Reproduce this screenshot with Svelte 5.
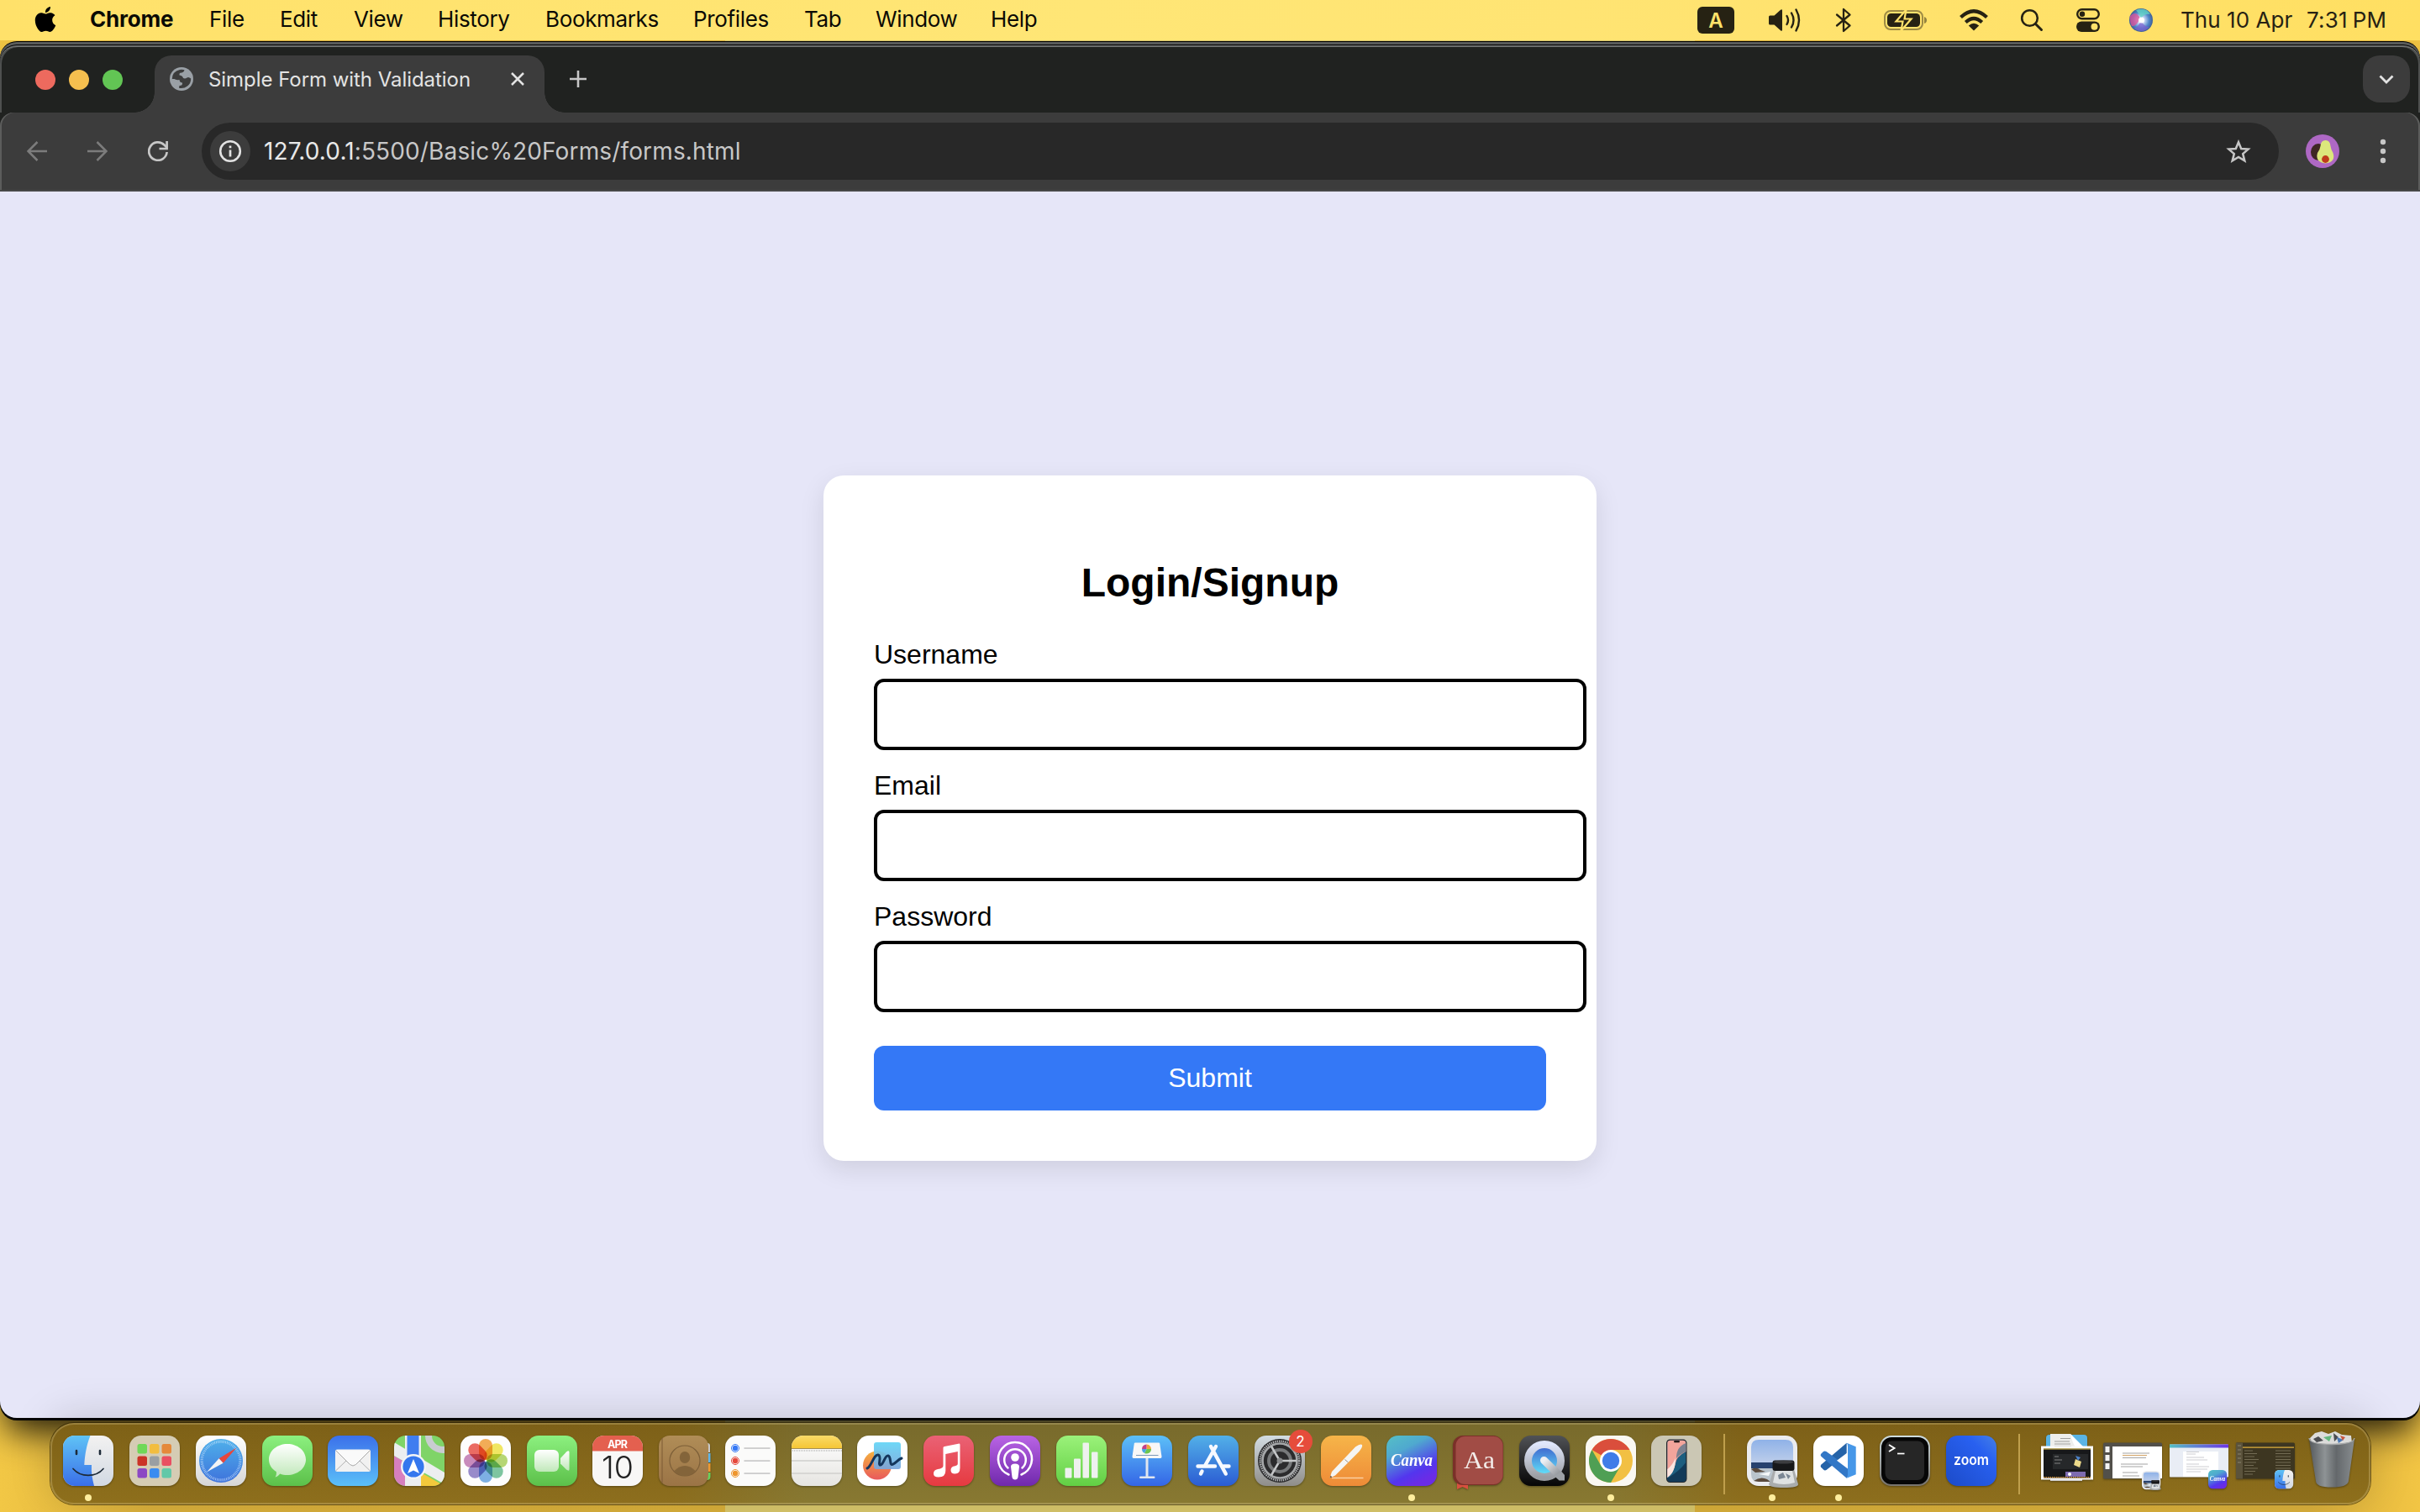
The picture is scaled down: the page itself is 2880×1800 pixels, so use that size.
<script>
  const menus = ['File', 'Edit', 'View', 'History', 'Bookmarks', 'Profiles', 'Tab', 'Window', 'Help'];
  const fields = [
    { id: 'username', label: 'Username', type: 'text' },
    { id: 'email', label: 'Email', type: 'email' },
    { id: 'password', label: 'Password', type: 'password' }
  ];
  const range = (n) => Array.from({ length: n }, (_, i) => i);
  const pads = ['#6fd858', '#f2bd3f', '#e5893a', '#cb3327', '#9a9fa2', '#e94f62', '#8c48c4', '#3a8cf0', '#62c8a8'];
  const petals = ['#f29a2e', '#efe23c', '#a6cf52', '#5fb98a', '#5d9fe0', '#7f6fc0', '#bd6fae', '#e8473d'];
</script>

{#snippet finder()}
  <rect width="60" height="60" rx="14" fill="url(#gFinderR)" />
  <path d="M14 0H32.5C28 11 26 23 25.3 35H34C33.4 44 35 52 37 60H14A14 14 0 0 1 0 46V14A14 14 0 0 1 14 0Z" fill="url(#gFinderL)" />
  <path d="M16 18v4M44 18v4" stroke="#1d2a38" stroke-width="2.6" stroke-linecap="round" />
  <path d="M12 39.500C21 50 39 50 48 39.500" fill="none" stroke="#1d2a38" stroke-width="1.700" stroke-linecap="round" />
{/snippet}

{#snippet launchpad()}
  <rect width="60" height="60" rx="14" fill="#d5ccb4" />
  {#each pads as c, i}
    <rect x={9.500 + (i % 3) * 14.500} y={10 + Math.floor(i / 3) * 14.500} width="11.500" height="11.500" rx="2.500" fill={c} />
  {/each}
{/snippet}

{#snippet safari()}
  <rect width="60" height="60" rx="14" fill="url(#gPaper)" />
  <circle cx="30" cy="30" r="26" fill="url(#gSafari)" />
  <circle cx="30" cy="30" r="22.800" fill="none" stroke="#d7ebff" stroke-width="3.200" stroke-dasharray="0.700 1.200" opacity=".8" />
  <path d="M48.500 14.500L27.600 27.200L32.600 32.700Z" fill="#e8463c" />
  <path d="M13 43.500L27.600 27.200L32.600 32.700Z" fill="#f4f4f4" />
{/snippet}

{#snippet messages()}
  <rect width="60" height="60" rx="14" fill="url(#gGreen)" />
  <path d="M30 10C42 10 52 18 52 28.500S42 47 30 47C26.500 47 23.800 46.500 21.200 45.500C19.500 47.800 17.500 49 15.500 49.500C16.800 47.500 17.200 45.500 16.800 43C11.500 39.800 8 34.800 8 28.500C8 18 18 10 30 10Z" fill="url(#gBubble)" />
{/snippet}

{#snippet mail()}
  <rect width="60" height="60" rx="14" fill="url(#gMail)" />
  <rect x="9" y="16.500" width="42" height="26.500" rx="2.500" fill="#f1f1f1" />
  <path d="M9.500 42L23 29M50.500 42L37 29" stroke="#a9a9a9" stroke-width=".9" />
  <path d="M9.500 17.500L26.500 34.500Q30 37.500 33.500 34.500L50.500 17.500" fill="#fafafa" stroke="#9f9f9f" stroke-width=".9" />
{/snippet}

{#snippet maps()}
  <g clip-path="url(#squircle)">
    <rect width="60" height="60" fill="#7fd468" />
    <path d="M0 24L14 32V60H0Z" fill="#d67fbe" />
    <path d="M30 60L60 60L32 44Z" fill="#f3c93c" />
    <path d="M0 8L60 44V58L0 24Z" fill="#eceef0" />
    <circle cx="58" cy="0" r="17" fill="none" stroke="#c9ccd0" stroke-width="8" />
    <path d="M13 0H32V60H13Z" fill="#eceef0" />
    <rect x="15.500" width="14" height="30" fill="#3f7df0" />
    <circle cx="23" cy="37" r="15" fill="#f3f4f6" />
    <circle cx="23" cy="37" r="12.600" fill="#3577ee" />
    <path d="M23 28L30 45L23 41.500L16 45Z" fill="#fff" />
  </g>
{/snippet}

{#snippet photos()}
  <rect width="60" height="60" rx="14" fill="#fdfdfd" />
  {#each petals as c, i}
    <rect x="22" y="4" width="16" height="25" rx="8" fill={c} opacity=".8" transform="rotate({i * 45} 30 30)" class="petal" />
  {/each}
{/snippet}

{#snippet facetime()}
  <rect width="60" height="60" rx="14" fill="url(#gGreen)" />
  <rect x="9" y="17" width="29" height="26" rx="6" fill="url(#gBubble)" />
  <path d="M40 27L47 19.500Q50.500 17 50.500 20V40Q50.500 43 47 40.500L40 33.500Z" fill="url(#gBubble)" />
{/snippet}

{#snippet calendar()}
  <rect width="60" height="60" rx="14" fill="#f8f7f6" />
  <path d="M0 18.500V14A14 14 0 0 1 14 0H46A14 14 0 0 1 60 14V18.500Z" fill="#e4604f" />
  <text x="30" y="14.500" text-anchor="middle" font-size="12.500" font-weight="700" fill="#fff" textLength="24">APR</text>
  <text x="30" y="50.500" text-anchor="middle" font-size="37" font-weight="300" fill="#222" textLength="38" lengthAdjust="spacingAndGlyphs">10</text>
{/snippet}

{#snippet contacts()}
  <path d="M52 9H58Q61 9 61 12V20H52Z" fill="#c9c9c9" />
  <rect x="52" y="21" width="9.500" height="11" fill="#5eb6ea" />
  <rect x="52" y="33" width="9.500" height="10" fill="#ee9a32" />
  <path d="M52 44H61.500V49Q61.500 53 57 53H52Z" fill="#68d15c" />
  <rect x="0" width="59" height="60" rx="13" fill="url(#gTan)" />
  <path d="M4 3V57" stroke="#7c5a34" stroke-width="1" />
  <circle cx="31" cy="30" r="18" fill="none" stroke="#7d5f38" stroke-width="1.200" />
  <ellipse cx="31" cy="26" rx="6.200" ry="7" fill="#83643a" />
  <path d="M18.500 42Q24 36 31 36T43.500 42Q38 48 31 48T18.500 42Z" fill="#83643a" />
{/snippet}

{#snippet reminders()}
  <rect width="60" height="60" rx="14" fill="#fbfbfa" />
  {#each ['#3478f6', '#e5483b', '#ee962e'] as c, i}
    <circle cx="12" cy={15 + i * 15} r="4.500" fill="none" stroke={c} stroke-width="1" />
    <circle cx="12" cy={15 + i * 15} r="3.200" fill={c} />
    <rect x="22.500" y={14.400 + i * 15} width="31" height="1.300" fill="#b9b9bb" />
  {/each}
{/snippet}

{#snippet notes()}
  <rect width="60" height="60" rx="14" fill="url(#gNote)" />
  <path d="M0 15V14A14 14 0 0 1 14 0H46A14 14 0 0 1 60 14V15Z" fill="url(#gNoteTop)" />
  <path d="M0 15.500H60" stroke="#a58f55" stroke-width="1" />
  <path d="M1 18H60" stroke="#9d9d9d" stroke-width="1" stroke-dasharray="1 1" />
  <path d="M0 30H60M0 45H60" stroke="#cfcfcd" stroke-width="1.500" />
{/snippet}

{#snippet freeform()}
  <rect width="60" height="60" rx="14" fill="#fff" />
  <circle cx="24" cy="35.500" r="17" fill="url(#gOrb)" />
  <rect x="20" y="8" width="32" height="32" rx="3" fill="url(#gCyan)" opacity=".92" />
  <path d="M12 39C17 37 20 22 25 23S24 36 28 35S33 23 37 24S38 37 43 34S48 29 53 27" fill="none" stroke="#14365c" stroke-width="3" stroke-linecap="round" stroke-linejoin="round" />
{/snippet}

{#snippet music()}
  <rect width="60" height="60" rx="14" fill="url(#gMusic)" />
  <path d="M23.500 14.500Q23.500 13.200 25 12.900L41.500 9.700Q43.500 9.300 43.500 11V38.500Q43.500 45.500 37.500 45.500Q32.500 45.500 32.500 41Q32.500 37 37.500 36.200Q40.800 35.700 40.800 33.500V19L26.300 22V42Q26.300 49.500 18 49.500Q12 49.500 12 45.200Q12 41 17 40Q23.500 39 23.500 36Z" fill="#fff" />
{/snippet}

{#snippet podcasts()}
  <rect width="60" height="60" rx="14" fill="url(#gPod)" />
  <path d="M22.500 46.500A20 20 0 1 1 37.500 46.500" fill="none" stroke="#fff" stroke-width="2.500" stroke-linecap="round" />
  <path d="M21.500 38.500A12.800 12.800 0 1 1 38.500 38.500" fill="none" stroke="#fff" stroke-width="2.500" stroke-linecap="round" />
  <circle cx="30" cy="26" r="4.800" fill="#fff" />
  <path d="M25 37Q25 33.500 30 33.500T35 37L33.500 49.500Q33 52.500 30 52.500T26.500 49.500Z" fill="#fff" />
{/snippet}

{#snippet numbers()}
  <rect width="60" height="60" rx="14" fill="url(#gNum)" />
  <rect x="10.500" y="38.500" width="8" height="12" rx="1" fill="#eef1ee" />
  <rect x="21" y="27.500" width="8" height="23" rx="1" fill="#eef1ee" />
  <rect x="31.500" y="8.500" width="7.500" height="42" rx="1" fill="#eef1ee" />
  <rect x="42" y="19.500" width="7.500" height="31" rx="1" fill="#eef1ee" />
{/snippet}

{#snippet keynote()}
  <rect width="60" height="60" rx="14" fill="url(#gKey)" />
  <rect x="28.500" y="26" width="3" height="24" fill="#dfe5ef" />
  <rect x="21" y="48.500" width="18.500" height="2.500" rx="1.200" fill="#dfe5ef" />
  <path d="M16 8.500H44Q45 8.500 45.200 9.500L47.500 25Q47.600 27 46 27H14Q12.400 27 12.500 25L14.800 9.500Q15 8.500 16 8.500Z" fill="#f7f7f7" />
  <path d="M17 23.500H43.500" stroke="#7b97b8" stroke-width="1" />
  <path d="M29.500 16V10.500A5.500 5.500 0 0 1 34.800 17.500Z" fill="#f0a63c" />
  <path d="M29.500 16L35 16A5.500 5.500 0 0 1 27 21Z" fill="#6cc64f" />
  <path d="M29.500 16L27 21A5.500 5.500 0 0 1 24 16Z" fill="#4aa6e0" />
  <path d="M29.500 16H24A5.500 5.500 0 0 1 29.500 10.500Z" fill="#c43f8b" />
{/snippet}

{#snippet appstore()}
  <rect width="60" height="60" rx="14" fill="url(#gStore)" />
  <g stroke="#f6f9ff" stroke-width="4.400" stroke-linecap="round">
    <path d="M33 13L20.500 35M27 13L44.800 45.500M16.500 42.500L15 45.500" />
    <path d="M11.500 36.500H32M42 36.500H48.500" />
  </g>
{/snippet}

{#snippet settings()}
  <rect width="60" height="60" rx="14" fill="url(#gSet)" />
  <circle cx="30" cy="30" r="26" fill="#2b2b2d" />
  <circle cx="30" cy="30" r="23.300" fill="none" stroke="#b4b6b8" stroke-width="2.600" stroke-dasharray="1.300 1.100" />
  <circle cx="30" cy="30" r="20.500" fill="none" stroke="#a6a8aa" stroke-width="2.600" />
  <circle cx="30" cy="30" r="13" fill="none" stroke="#77797b" stroke-width="4" />
  <path d="M30 30H50M30 30L20 12.800M30 30L20 47.200" stroke="#c4c6c8" stroke-width="2.600" />
  <circle cx="30" cy="30" r="3.500" fill="#8a8c8e" />
{/snippet}

{#snippet pages()}
  <rect width="60" height="60" rx="14" fill="url(#gPages)" />
  <path d="M13 50.500H50.500" stroke="#fbd0a0" stroke-width="1.600" />
  <path d="M10.500 50.500L13 43L41 13.500Q47 9.500 49 11Q50 13.500 45.500 19L17 47.500Z" fill="#f5f5f3" />
  <path d="M28.500 28.500L32.500 32" stroke="#9a8f85" stroke-width="1" />
  <path d="M10.500 50.500L11.500 47.500L13.500 49.500Z" fill="#6a5a4a" />
{/snippet}

{#snippet canva()}
  <rect width="60" height="60" rx="14" fill="url(#gCanva)" />
  <text x="5" y="35.500" class="script" font-size="20" fill="#fff" textLength="50" lengthAdjust="spacingAndGlyphs">Canva</text>
{/snippet}

{#snippet dictionary()}
  <path d="M5 54H18V64L11.500 61L5 64Z" fill="#d8503f" />
  <rect width="60" height="59" rx="12" fill="#7b3029" />
  <rect x="3.500" y="1" width="56" height="57" rx="11" fill="#a14c45" />
  <text x="31.500" y="38.500" text-anchor="middle" class="serif" font-size="30" fill="#f3ece9" textLength="37" lengthAdjust="spacingAndGlyphs">Aa</text>
{/snippet}

{#snippet quicktime()}
  <rect width="60" height="60" rx="14" fill="url(#gDark)" />
  <circle cx="30" cy="30" r="19.500" fill="url(#gQt)" stroke="url(#gSilver)" stroke-width="9" />
  <path d="M29.500 29.500L48 47.500" stroke="url(#gSilver2)" stroke-width="9" stroke-linecap="round" />
  <path d="M42 48L50 42.500L54 47V53.500H47.500Z" fill="#9da1a6" />
{/snippet}

{#snippet chrome()}
  <rect width="60" height="60" rx="14" fill="#faf8f2" />
  <circle cx="30" cy="30" r="26" fill="#f2c043" />
  <path d="M30 30L7.500 17A26 26 0 0 1 52.500 17H30Z" fill="#da4e3c" />
  <path d="M18.700 36.500L7.500 17A26 26 0 0 0 30 56L41.300 36.500Z" fill="#4f9f54" />
  <circle cx="30" cy="30" r="13" fill="#fff" />
  <circle cx="30" cy="30" r="10.200" fill="#3f7ce8" />
{/snippet}

{#snippet iphone()}
  <rect width="60" height="60" rx="14" fill="#cbc7b4" />
  <rect x="18" y="4.500" width="24.500" height="51.500" rx="4.500" fill="#20242b" />
  <rect x="19.300" y="5.800" width="22" height="49" rx="3.500" fill="#1d5e7f" />
  <path d="M19.300 50V9Q19.300 5.800 23 5.800H37.500Q41.300 5.800 41.300 9V19Q30 25 29 33Q27 44 19.300 50Z" fill="#f3a59c" />
  <path d="M19.300 50V40Q24 37 29 27Q29 44 19.300 50Z" fill="#fbe6e0" />
  <path d="M30 27Q30 13 41.300 9V19Q33 23 30 27Z" fill="#7b8190" />
  <path d="M19.300 51Q34 42 41.300 32V51Q41.300 54.800 37.500 54.800H23Q19.300 54.800 19.300 51Z" fill="#123a58" />
  <rect x="27" y="6.200" width="7" height="2" rx="1" fill="#0a0a0a" />
{/snippet}

{#snippet preview()}
  <rect width="60" height="60" rx="14" fill="#ebecef" />
  <path d="M5 14Q5 5 14 5H46Q55 5 55 14V32H5Z" fill="url(#gSky)" />
  <rect x="5" y="32" width="50" height="8" fill="#27426e" />
  <path d="M5 39H55V46Q55 55 46 55H14Q5 55 5 46Z" fill="#b9c4cc" />
  <path d="M5 40Q12 37 16 41L22 43L10 44ZM8 54Q16 48 24 52L28 55H14Z" fill="#5a4a3c" />
  <path d="M14 46L28 43L26 48Z" fill="#f4f7f8" />
  <path d="M32 40H56L61 58Q61 62 44 62T26 58Z" fill="#a9acad" />
  <path d="M34 42H54L57 56Q44 60 31 56Z" fill="#dfe2e3" />
  <path d="M37 47L43 44L46 50L38 52ZM46 45L52 48L49 52Z" fill="#7b8794" />
  <rect x="30.500" y="29.500" width="26" height="12.500" rx="3" fill="#17181a" />
  <ellipse cx="43.500" cy="31.500" rx="12" ry="2" fill="#3c3d40" />
{/snippet}

{#snippet vscode()}
  <rect width="60" height="60" rx="14" fill="#fff" />
  <path d="M39.700 8.700L39.700 22L15.500 41Q13.500 42 12 40.500L9 37.500Q8 36 9.500 34.500Z" fill="#2563a8" />
  <path d="M39.700 50.700L9.500 25Q8 23.500 9 22L12 19Q13.500 17.800 15.500 19L46 41Z" fill="#3277c6" />
  <path d="M39.700 8.700L50.700 13.300V46.300L39.700 50.700Q41 49 41 46V13Q41 10 39.700 8.700Z" fill="#4697e8" />
  <path d="M41 20V39.500L28 29.700Z" fill="#fff" />
{/snippet}

{#snippet terminal()}
  <rect width="60" height="60" rx="14" fill="url(#gTerm)" />
  <rect x="2" y="2" width="56" height="56" rx="12" fill="#060606" />
  <rect x="6.500" y="6.500" width="46.500" height="46.500" rx="8" fill="#262626" />
  <path d="M11 11L17.500 15L11 19" fill="none" stroke="#fff" stroke-width="1.900" />
  <path d="M21 21.500H29.500" stroke="#fff" stroke-width="1.700" />
{/snippet}

{#snippet zoom()}
  <rect width="60" height="60" rx="14" fill="url(#gZoom)" />
  <text x="30" y="34.500" text-anchor="middle" font-size="18" font-weight="600" fill="#fff" textLength="42" lengthAdjust="spacingAndGlyphs">zoom</text>
{/snippet}

{#snippet downloads()}
  <rect x="5" y="-1" width="49" height="24" rx="4" fill="#5ab4e4" />
  <path d="M10 -2H34L48 14V50H10Z" fill="#eeeeec" />
  <path d="M34 -2L50 14H40Q36 8 34 -2Z" fill="#fff" />
  <path d="M22 3.500H34M15 7H33M15 10H34M15 13H35" stroke="#8a8a8a" stroke-width=".8" />
  <rect x="10" y="50" width="38" height="4" fill="#cfcfcf" />
  <rect x="-1" y="12.500" width="62" height="40" fill="#fafafa" />
  <rect x="2" y="15.500" width="56" height="35" fill="#17181a" />
  <rect x="2" y="15.500" width="56" height="1" fill="#e8c84e" />
  <rect x="13" y="22" width="42" height="18" fill="#26282a" />
  <path d="M15 25H20M15 29H24M15 33H22" stroke="#9a9a9a" stroke-width=".8" />
  <path d="M40 28L47 31L45 38L38 35Z" fill="#ecd98a" />
  <path d="M40 24L46 26L43 30Z" fill="#4c82c8" />
  <rect x="28" y="43" width="24" height="6" fill="#7d6bb0" />
  <circle cx="33" cy="46" r="2" fill="#fff" />
  <path d="M2 49.700H58" stroke="#d5963d" stroke-width="1.400" stroke-dasharray="1.500 1" />
{/snippet}

{#snippet minPreview()}
  <rect x="-5" y="8.500" width="70" height="43" rx="1.500" fill="#52504a" />
  <rect x="6" y="13" width="59" height="38" fill="#fff" />
  <rect x="-2.500" y="13" width="5" height="7" fill="#f3f3f3" />
  <rect x="-2.500" y="23" width="5" height="7" fill="#f3f3f3" />
  <rect x="-2.500" y="33" width="5" height="7" fill="#f3f3f3" />
  <path d="M18 21H50M18 26.500H46M16 34H48M16 37H42M18 44H36M18 48H38" stroke="#8d8d8d" stroke-width=".8" />
  <path d="M18 23.500H47" stroke="#d3a468" stroke-width="1" />
  <g transform="translate(41 42) scale(.37)">{@render preview()}</g>
{/snippet}

{#snippet minCanva()}
  <rect x="-5" y="10.500" width="70" height="39" rx="1" fill="#e9edf5" />
  <rect x="-5" y="10.500" width="70" height="4" fill="url(#gCanvaBar)" />
  <rect x="11" y="19" width="42" height="30" fill="#fff" />
  <path d="M15 19.500H30M15 22H26M15 26H36M15 29H40M15 34H30M15 37H42M15 40H40M15 43H32" stroke="#b7b7bd" stroke-width=".7" />
  <g transform="translate(41 41) scale(.37)">{@render canva()}</g>
{/snippet}

{#snippet minFinder()}
  <rect x="-5" y="8.500" width="70" height="43" rx="1.500" fill="#3d3621" />
  <rect x="-5" y="8.500" width="8" height="43" fill="#5b533c" />
  <path d="M-3 12H1M-3 17H1M-3 22H1M-3 27H1M-3 32H1" stroke="#918a74" stroke-width=".9" />
  <rect x="3" y="13.500" width="61" height="1.200" fill="#e8b53f" />
  {#each range(9) as i}
    <path d="M5 {18 + i * 3.500}H{15 + ((i * 5) % 8)}M42 {18 + i * 3.500}H60" stroke="#827a62" stroke-width=".8" />
  {/each}
  <g transform="translate(41 41) scale(.37)">{@render finder()}</g>
{/snippet}

{#snippet trash()}
  <path d="M4 3L10 -3L18 -5L26 -2L34 -5L42 -1L53 0L54 8L30 14L6 10Z" fill="#dcdcda" />
  <path d="M8 4L14 1L20 6L12 8ZM32 -3L38 2L33 7Z" fill="#4b4d50" />
  <path d="M20 2L30 0L27 7Z" fill="#63b77d" /><path d="M36 2L44 5L38 9Z" fill="#4c79b5" /><path d="M40 0L46 2L43 6Z" fill="#c8553d" />
  <path d="M3 4Q5 10 30 10T57 4L50 54Q49 61.500 30 61.500T11 54Z" fill="url(#gTrash)" />
  <path d="M3 3Q4 10.500 30 10.500T57 3" fill="none" stroke="#a5a7a8" stroke-width="1.400" />
{/snippet}

{#snippet cell(draw, running = false, badge = '')}
  <div class="cell">
    <svg class="app" viewBox="0 0 60 60">{@render draw()}</svg>
    {#if running}<span class="dot"></span>{/if}
    {#if badge}<span class="badge">{badge}</span>{/if}
  </div>
{/snippet}

<svg class="defs" aria-hidden="true">
  <defs>
    <clipPath id="squircle"><rect width="60" height="60" rx="14" /></clipPath>
    <linearGradient id="gFinderL" x2="0" y2="1"><stop stop-color="#5fc3f6" /><stop offset="1" stop-color="#3a6fe8" /></linearGradient>
    <linearGradient id="gFinderR" x2="0" y2="1"><stop stop-color="#f3f2f1" /><stop offset="1" stop-color="#d2d9e3" /></linearGradient>
    <linearGradient id="gPaper" x2="0" y2="1"><stop stop-color="#fff" /><stop offset="1" stop-color="#d6d6d6" /></linearGradient>
    <linearGradient id="gSafari" x2="0" y2="1"><stop stop-color="#4fb0ea" /><stop offset="1" stop-color="#3e73dc" /></linearGradient>
    <linearGradient id="gGreen" x2="0" y2="1"><stop stop-color="#8cf07f" /><stop offset="1" stop-color="#5cc04a" /></linearGradient>
    <linearGradient id="gBubble" x2="0" y2="1"><stop stop-color="#fff" /><stop offset="1" stop-color="#c0e8b9" /></linearGradient>
    <linearGradient id="gMail" x2="0" y2="1"><stop stop-color="#3b70ea" /><stop offset="1" stop-color="#5bc0f8" /></linearGradient>
    <linearGradient id="gTan" x2="0" y2="1"><stop stop-color="#b08d57" /><stop offset="1" stop-color="#9b7446" /></linearGradient>
    <linearGradient id="gNote" x2="0" y2="1"><stop stop-color="#fff" /><stop offset="1" stop-color="#e6e5e1" /></linearGradient>
    <linearGradient id="gNoteTop" x2="0" y2="1"><stop stop-color="#fadb68" /><stop offset="1" stop-color="#f5c636" /></linearGradient>
    <linearGradient id="gOrb" x2="0" y2="1"><stop stop-color="#f4b13d" /><stop offset="1" stop-color="#e95a5c" /></linearGradient>
    <linearGradient id="gCyan" x2="0" y2="1"><stop stop-color="#62d4f6" /><stop offset="1" stop-color="#7aa6dc" /></linearGradient>
    <linearGradient id="gMusic" x2="0" y2="1"><stop stop-color="#ea6275" /><stop offset="1" stop-color="#e63a40" /></linearGradient>
    <linearGradient id="gPod" x2="0" y2="1"><stop stop-color="#b964e4" /><stop offset="1" stop-color="#7029ad" /></linearGradient>
    <linearGradient id="gNum" x2="0" y2="1"><stop stop-color="#9bf27a" /><stop offset="1" stop-color="#62cf44" /></linearGradient>
    <linearGradient id="gKey" x2="0" y2="1"><stop stop-color="#5cc0f8" /><stop offset="1" stop-color="#3466e6" /></linearGradient>
    <linearGradient id="gStore" x2="0" y2="1"><stop stop-color="#52b0e8" /><stop offset="1" stop-color="#2b5cd3" /></linearGradient>
    <linearGradient id="gSet" x2="0" y2="1"><stop stop-color="#d3dde3" /><stop offset="1" stop-color="#8f8d8a" /></linearGradient>
    <linearGradient id="gPages" x2="0" y2="1"><stop stop-color="#f6b549" /><stop offset="1" stop-color="#ee8b37" /></linearGradient>
    <linearGradient id="gCanva" x2=".5" y2="1"><stop stop-color="#55c0c6" /><stop offset=".35" stop-color="#4fa9cf" /><stop offset=".8" stop-color="#5336ee" /><stop offset="1" stop-color="#6a2ce6" /></linearGradient>
    <linearGradient id="gCanvaBar"><stop stop-color="#54c0c4" /><stop offset="1" stop-color="#6d35e6" /></linearGradient>
    <linearGradient id="gDark" x2="0" y2="1"><stop stop-color="#505256" /><stop offset="1" stop-color="#060606" /></linearGradient>
    <linearGradient id="gQt" x2="0" y2="1"><stop stop-color="#3c5ccb" /><stop offset="1" stop-color="#65edfd" /></linearGradient>
    <linearGradient id="gSilver" x2="0" y2="1"><stop stop-color="#dfe6fb" /><stop offset="1" stop-color="#9a9da2" /></linearGradient>
    <linearGradient id="gSilver2" x2="1" y2="1"><stop stop-color="#eef0f4" /><stop offset="1" stop-color="#8d9196" /></linearGradient>
    <linearGradient id="gSky" x2="0" y2="1"><stop stop-color="#8fb2e8" /><stop offset="1" stop-color="#bccdea" /></linearGradient>
    <linearGradient id="gTerm" x2="0" y2="1"><stop stop-color="#cfdde0" /><stop offset="1" stop-color="#77736c" /></linearGradient>
    <linearGradient id="gZoom" x1="1" x2="0" y2="1"><stop stop-color="#4580e6" /><stop offset=".3" stop-color="#2860f0" /><stop offset="1" stop-color="#1c4bc8" /></linearGradient>
    <linearGradient id="gTrash"><stop stop-color="#55595c" /><stop offset=".35" stop-color="#8e9395" /><stop offset=".6" stop-color="#64686b" /><stop offset="1" stop-color="#888d90" /></linearGradient>
    <radialGradient id="gSiri" cx=".5" cy=".5"><stop stop-color="#fff" /><stop offset=".3" stop-color="#c9d7f4" /><stop offset=".7" stop-color="#4e86c8" /><stop offset="1" stop-color="#3f5f96" /></radialGradient>
  </defs>
</svg>

<div class="desktop">
  <header class="menubar">
    <svg class="apple" viewBox="0 0 24 24"><path d="M12.152 6.896c-.948 0-2.415-1.078-3.960-1.040-2.040.027-3.910 1.183-4.961 3.014-2.117 3.675-.546 9.103 1.519 12.090 1.013 1.454 2.208 3.090 3.792 3.039 1.520-.065 2.090-.987 3.935-.987 1.831 0 2.350.987 3.960.948 1.637-.026 2.676-1.480 3.676-2.948 1.156-1.688 1.636-3.325 1.662-3.415-.039-.013-3.182-1.221-3.220-4.857-.026-3.040 2.480-4.494 2.597-4.559-1.429-2.090-3.623-2.324-4.390-2.376-2-.156-3.675 1.090-4.610 1.090zM15.530 3.830c.843-1.012 1.400-2.427 1.245-3.830-1.207.052-2.662.805-3.532 1.818-.780.896-1.454 2.338-1.273 3.714 1.338.104 2.715-.688 3.559-1.701" /></svg>
    <nav>
      <b>Chrome</b>
      {#each menus as m}<span>{m}</span>{/each}
    </nav>
    <div class="status">
      <span class="lang">A</span>
      <svg class="vol" viewBox="0 0 40 28"><path d="M0 10Q0 8.500 1.500 8.500H6.500L14 1.700Q16 .3 16 2.500V25.500Q16 27.700 14 26.300L6.500 19.500H1.500Q0 19.500 0 18Z" fill="#262213" /><path d="M21.500 9Q24.500 14 21.500 19M27 5.500Q32 14 27 22.500M32.500 1.500Q39.500 14 32.500 26.500" fill="none" stroke="#262213" stroke-width="2.400" stroke-linecap="round" /></svg>
      <svg class="bt" viewBox="0 0 20 30"><path d="M2 8.500L17.500 21.500L10 28V2L17.500 8.500L2 21.500" fill="none" stroke="#262213" stroke-width="2.300" stroke-linejoin="round" stroke-linecap="round" /></svg>
      <svg class="bat" viewBox="0 0 52 28"><rect x="1" y="3" width="45" height="22" rx="7" fill="none" stroke="#262213" stroke-width="2" opacity=".45" /><path d="M48 10Q51 11 51 14T48 18Z" fill="#262213" opacity=".5" /><rect x="4" y="6" width="39" height="16" rx="4.500" fill="#262213" /><path d="M26.500 1.500L14.500 15.500H22.500L20.500 26.500L32.500 12.500H24.500Z" fill="#262213" stroke="#ffe26b" stroke-width="2.200" /></svg>
      <svg class="wifi" viewBox="0 0 36 26"><path d="M2.500 9.500Q18 -5 33.500 9.500M8.300 15.500Q18 6.500 27.700 15.500" fill="none" stroke="#262213" stroke-width="4.200" /><path d="M18 25.500L11.800 19.500Q18 13.800 24.200 19.500Z" fill="#262213" /></svg>
      <svg class="find" viewBox="0 0 28 28"><circle cx="11.500" cy="11.500" r="9.300" fill="none" stroke="#262213" stroke-width="2.600" /><path d="M18.500 18.500L25.500 25.500" stroke="#262213" stroke-width="3" stroke-linecap="round" /></svg>
      <svg class="cc" viewBox="0 0 28 28"><rect x="1.200" y="1.200" width="25.600" height="11" rx="5.500" fill="none" stroke="#262213" stroke-width="2.400" /><circle cx="7" cy="6.700" r="3.200" fill="#262213" /><rect y="15.500" width="28" height="12.500" rx="6.200" fill="#262213" /><circle cx="21.500" cy="21.700" r="4" fill="#ffe26b" /></svg>
      <svg class="siri" viewBox="0 0 28 28"><circle cx="14" cy="14" r="14" fill="url(#gSiri)" /><path d="M1 9Q8 2 13 12Q8 22 3 21Q0 15 1 9Z" fill="#e04f96" opacity=".75" /><path d="M8 2Q20 -2 25 7Q18 6 14 12Q12 6 8 2Z" fill="#5fd3c4" opacity=".8" /><path d="M6 24Q12 20 14 15Q18 22 24 22Q16 31 6 24Z" fill="#7a5fd0" opacity=".7" /><circle cx="14.500" cy="14" r="3.500" fill="#fff" opacity=".95" /></svg>
      <span class="date">Thu 10 Apr</span>
      <span class="clock">7:31 PM</span>
    </div>
  </header>

  <section class="window">
    <div class="tabs">
      <div class="lights"><i class="red"></i><i class="amber"></i><i class="green"></i></div>
      <div class="tab">
        <svg class="globe" viewBox="0 0 28 28">
          <circle cx="14" cy="14" r="14" fill="#9aa0a6" />
          <path d="M2.800 14Q3 5 12 3Q15 2.500 17.500 3.200Q17 6.500 12.500 6.800Q11 7.500 11.500 9.500Q15.500 10 16 13Q18.500 14 20.500 12.500Q22.500 11 25.200 13.500Q25.400 19 21 22.500Q17 25.800 11 24.800L11.500 22Q15.500 22 15 18.500Q12 18.500 11.500 15Q7 15.500 5.500 14Z" fill="#3c3c3c" />
        </svg>
        <span class="title">Simple Form with Validation</span>
        <svg class="close" viewBox="0 0 16 16"><path d="M1 1L15 15M15 1L1 15" stroke="#e3e3e3" stroke-width="2.500" /></svg>
      </div>
      <svg class="plus" viewBox="0 0 20 20"><path d="M10 0V20M0 10H20" stroke="#c7c7c7" stroke-width="2.600" /></svg>
      <div class="more"><svg viewBox="0 0 18 11"><path d="M1.500 1.500L9 9L16.500 1.500" fill="none" stroke="#e3e3e3" stroke-width="2.800" /></svg></div>
    </div>
    <div class="toolbar">
      <svg class="nav back" viewBox="0 0 24 24"><path d="M24 12H2M12.500 1L1.500 12L12.500 23" fill="none" stroke="#7c7c7c" stroke-width="2.500" /></svg>
      <svg class="nav fwd" viewBox="0 0 24 24"><path d="M0 12H22M11.500 1L22.500 12L11.500 23" fill="none" stroke="#7c7c7c" stroke-width="2.500" /></svg>
      <svg class="nav reload" viewBox="0 0 24 24"><path d="M22.600 13A10.700 10.700 0 1 1 19.500 4.500L22.500 7.500" fill="none" stroke="#c7c7c7" stroke-width="2.700" /><path d="M22.600 0V9H13.500" fill="none" stroke="#c7c7c7" stroke-width="2.700" /></svg>
      <div class="url">
        <span class="info"><svg viewBox="0 0 28 28"><circle cx="14" cy="14" r="11.800" fill="none" stroke="#e3e3e3" stroke-width="2.600" /><path d="M14 12.500V20.500M14 7.500V10.200" stroke="#e3e3e3" stroke-width="2.700" /></svg></span>
        <span class="addr"><em>127.0.0.1</em>:5500/Basic%20Forms/forms.html</span>
        <svg class="star" viewBox="0 0 30 29"><path d="M15 3.200L18.200 11L26.600 11.600L20.200 17.100L22.300 25.400L15 20.900L7.700 25.400L9.800 17.100L3.400 11.600L11.800 11Z" fill="none" stroke="#c7c7c7" stroke-width="2.500" /></svg>
      </div>
      <svg class="avatar" viewBox="0 0 40 40"><circle cx="20" cy="20" r="20" fill="#ae68c4" /><ellipse cx="15" cy="21" rx="9" ry="10" fill="#3e2723" /><path d="M23.500 7Q29 7 29.500 14Q30 18 32.500 22Q36 33 23.500 34.500Q11 33 14 22Q17 18 17.500 14Q18 7 23.500 7Z" fill="#dce77c" /><circle cx="23.500" cy="29.500" r="4.400" fill="#bf3b1b" /></svg>
      <svg class="dots" viewBox="0 0 8 30"><circle cx="4" cy="4" r="3.200" /><circle cx="4" cy="15" r="3.200" /><circle cx="4" cy="26" r="3.200" /></svg>
    </div>
    <main>
      <form class="card" onsubmit={(e) => e.preventDefault()}>
        <h2>Login/Signup</h2>
        {#each fields as f}
          <label for={f.id}>{f.label}</label>
          <input id={f.id} type={f.type} />
        {/each}
        <button type="submit">Submit</button>
      </form>
    </main>
  </section>

  <footer class="dock">
    {@render cell(finder, true)}
    {@render cell(launchpad)}
    {@render cell(safari)}
    {@render cell(messages)}
    {@render cell(mail)}
    {@render cell(maps)}
    {@render cell(photos)}
    {@render cell(facetime)}
    {@render cell(calendar)}
    {@render cell(contacts)}
    {@render cell(reminders)}
    {@render cell(notes)}
    {@render cell(freeform)}
    {@render cell(music)}
    {@render cell(podcasts)}
    {@render cell(numbers)}
    {@render cell(keynote)}
    {@render cell(appstore)}
    {@render cell(settings, false, '2')}
    {@render cell(pages)}
    {@render cell(canva, true)}
    {@render cell(dictionary)}
    {@render cell(quicktime)}
    {@render cell(chrome, true)}
    {@render cell(iphone)}
    <span class="sep"></span>
    {@render cell(preview, true)}
    {@render cell(vscode, true)}
    {@render cell(terminal)}
    {@render cell(zoom)}
    <span class="sep"></span>
    {@render cell(downloads)}
    {@render cell(minPreview)}
    {@render cell(minCanva)}
    {@render cell(minFinder)}
    {@render cell(trash)}
  </footer>
</div>

<style>
  :global(body) { margin: 0; overflow: hidden; }
  .defs { position: absolute; width: 0; height: 0; }
  .desktop {
    width: 2880px; height: 1800px; overflow: hidden; display: flex; flex-direction: column;
    font-family: Inter, "Liberation Sans", sans-serif;
    background: linear-gradient(90deg, #f2c745 0, #dcb13c 180px, #dab03a 863px, #dac86c 863px, #dac86c 2017px, #dab03a 2017px, #dcb13c 2750px, #f2c544 2880px);
  }

  .menubar { height: 48px; flex: none; display: flex; align-items: center; color: #0b0a04; font-size: 26px; background: linear-gradient(90deg, #ffe16a, #ffe676 45%, #ffe473 65%, #ffdf62); position: relative; z-index: 1; }
  .apple { width: 30px; height: 30px; margin: -3px 38px 0 39px; }
  nav { display: grid; grid-template-columns: 142px 84px 88px 100px 128px 176px 132px 85px 137px 80px; height: 48px; line-height: 46px; letter-spacing: -0.35px; white-space: nowrap; }
  nav b { font-weight: 700; letter-spacing: -0.2px; }
  .status { margin-left: auto; display: flex; align-items: center; padding-right: 37px; color: #262213; white-space: nowrap; line-height: 46px; }
  .lang { width: 44px; height: 32px; border-radius: 6px; background: #262213; color: #ffe26b; font-size: 24px; font-weight: 600; line-height: 33px; text-align: center; margin-right: 41px; }
  .vol { width: 40px; height: 28px; margin-right: 39px; }
  .bt { width: 20px; height: 30px; margin-right: 38px; }
  .bat { width: 52px; height: 28px; margin-right: 37px; }
  .wifi { width: 36px; height: 26px; margin-right: 37px; }
  .find { width: 28px; height: 28px; margin-right: 39px; margin-top: -1px; }
  .cc { width: 28px; height: 28px; margin-right: 35px; }
  .siri { width: 28px; height: 28px; margin-right: 33px; }
  .date { width: 150px; letter-spacing: 0.050px; }
  .clock { width: 98px; letter-spacing: 0.200px; word-spacing: -1.500px; }

  .window {
    height: 1632px; flex: none; margin-top: 8px; display: flex; flex-direction: column; border-radius: 20px; background: #202220;
    box-shadow: 0 -2px 0 #6c6e6d, 0 -3px 0 #000, 0 -6px 0 #5a5c5b, 0 -7px 0 #000, 0 3px 0 #060606, 0 22px 40px -6px rgba(0, 0, 0, .85);
  }
  .tabs { height: 78px; flex: none; display: flex; padding: 10px 12px 0 42px; box-sizing: border-box; border-radius: 20px 20px 0 0; box-shadow: inset 2px 0 #4e504f, inset -2px 0 #4e504f; }
  .lights { display: flex; gap: 16px; width: 142px; padding-top: 17px; }
  .lights i { width: 24px; height: 24px; border-radius: 50%; }
  .red { background: #ed6a5e; }
  .amber { background: #f5bf4f; }
  .green { background: #62c554; }
  .tab { width: 464px; height: 68px; box-sizing: border-box; position: relative; display: flex; align-items: center; padding: 0 24px 12px 18px; background: #3c3c3c; border-radius: 20px 20px 0 0; color: #e3e3e3; }
  .tab::before, .tab::after { content: ''; position: absolute; bottom: 0; width: 24px; height: 24px; }
  .tab::before { left: -24px; background: radial-gradient(circle at 0 0, transparent 23.500px, #3c3c3c 24px); }
  .tab::after { right: -24px; background: radial-gradient(circle at 100% 0, transparent 23.500px, #3c3c3c 24px); }
  .globe { width: 28px; height: 28px; margin-right: 18px; }
  .title { font-size: 24px; width: 312px; white-space: nowrap; letter-spacing: -0.050px; }
  .close { width: 16px; height: 16px; margin-left: auto; }
  .plus { width: 20px; height: 20px; margin: 18px 0 0 30px; }
  .more { margin-left: auto; width: 56px; height: 56px; border-radius: 20px; background: #3c3c3c; display: grid; place-items: center; }
  .more svg { width: 18px; height: 11px; }
  .toolbar { height: 94px; flex: none; box-sizing: border-box; display: flex; align-items: center; background: #3c3c3c; border-bottom: 2px solid #474848; border-radius: 16px 16px 0 0; box-shadow: inset 2px 0 #5c5d5c, inset -2px 0 #5c5d5c; }
  .nav { width: 24px; height: 24px; }
  .back { margin-left: 32px; }
  .fwd { margin-left: 48px; }
  .reload { margin: 0 40px 0 48px; }
  .url { width: 2472px; height: 68px; box-sizing: border-box; border-radius: 34px; background: #282828; display: flex; align-items: center; padding: 0 33px 0 10px; }
  .info { width: 48px; height: 48px; border-radius: 50%; background: #3c3c3c; display: grid; place-items: center; margin-right: 16px; }
  .info svg { width: 28px; height: 28px; }
  .addr { font-size: 28px; color: #c7c7c7; white-space: nowrap; letter-spacing: 0.140px; }
  .addr em { font-style: normal; color: #e8e8e8; }
  .star { width: 30px; height: 29px; margin-left: auto; }
  .avatar { width: 40px; height: 40px; margin-left: 32px; }
  .dots { width: 8px; height: 30px; margin-left: 48px; fill: #c7c7c7; }

  main { flex: 1; background: #e6e6f8; border-radius: 0 0 20px 20px; padding-top: 338px; font-family: "Liberation Sans", Arial, sans-serif; }
  .card { width: 920px; height: 816px; box-sizing: border-box; margin: 0 auto; padding: 100px 60px 60px; background: #fff; border-radius: 24px; box-shadow: 0 10px 30px rgba(0, 0, 0, .1); display: flex; flex-direction: column; color: #000; }
  h2 { margin: 0 0 40px; font-size: 48px; line-height: 55px; text-align: center; }
  label { font-size: 32px; line-height: 37px; margin-bottom: 10px; }
  input { width: 848px; height: 85px; box-sizing: border-box; border: 4px solid #000; border-radius: 12px; background: #fff; margin: 0 0 24px; flex: none; }
  button { width: 800px; height: 77px; margin-top: 16px; border: 0; border-radius: 12px; background: #3478f6; color: #fff; font: 32px "Liberation Sans", Arial, sans-serif; flex: none; }

  .dock {
    position: relative; z-index: 2; width: 2761px; height: 97px; flex: none; box-sizing: border-box; margin: 6px 0 0 60px; padding: 0 6px; display: flex; align-items: flex-start; border-radius: 28px;
    background: linear-gradient(180deg, rgba(0, 0, 0, .07), rgba(255, 230, 90, .06)), linear-gradient(90deg, #876818 0, #86671a 740px, #81722f 900px, #81722f 1850px, #86671a 2010px, #876818);
    box-shadow: inset 0 0 0 2px rgba(255, 240, 190, .22), 0 0 0 1px rgba(40, 30, 0, .6), 0 -6px 50px rgba(0, 0, 0, .17);
  }
  .cell { width: 78.750px; flex: none; display: flex; flex-direction: column; align-items: center; position: relative; padding-top: 15px; }
  .app { width: 60px; height: 60px; overflow: visible; filter: drop-shadow(0 1px 1px rgba(0, 0, 0, .35)); }
  .petal { mix-blend-mode: multiply; }
  .script { font-family: "Liberation Serif", serif; font-style: italic; font-weight: 700; }
  .serif { font-family: "Liberation Serif", serif; }
  .dot { width: 8px; height: 8px; margin-top: 10px; border-radius: 50%; background: #ffee9e; }
  .badge { position: absolute; left: 50px; top: 8px; width: 28px; height: 28px; border-radius: 50%; background: #e64c3b; color: #fff; font-size: 17px; line-height: 28px; text-align: center; }
  .sep { width: 2px; height: 72px; margin: 13px 16.600px 0; background: #bf9f4c; flex: none; }
</style>
